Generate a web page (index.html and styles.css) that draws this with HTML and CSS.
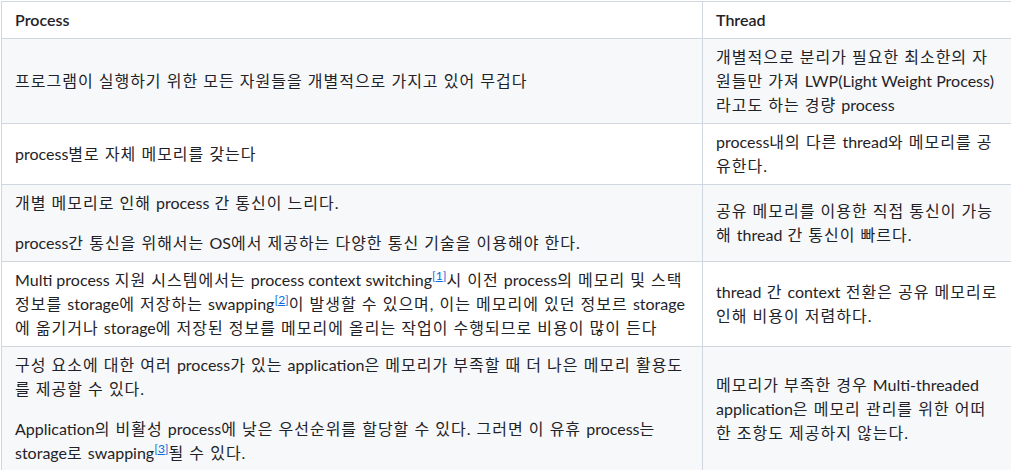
FILE: index.html
```html
<!DOCTYPE html>
<html lang="ko">
<head>
<meta charset="utf-8">
<link rel="stylesheet" href="styles.css">
</head>
<body>
<div class="wrap">
<table class="md-table">
  <colgroup><col class="c1"><col class="c2"></colgroup>
  <thead>
    <tr><th><span class="en">Process</span></th><th><span class="en">Thread</span></th></tr>
  </thead>
  <tbody>
    <tr>
      <td>프로그램이 실행하기 위한 모든 자원들을 개별적으로 가지고 있어 무겁다</td>
      <td>개별적으로 분리가 필요한 최소한의 자원들만 가져 <span class="en">LWP(Light Weight Process)</span> 라고도 하는 경량 <span class="en">process</span></td>
    </tr>
    <tr>
      <td><span class="en">process</span>별로 자체 메모리를 갖는다</td>
      <td><span class="en">process</span>내의 다른 <span class="en">thread</span>와 메모리를 공유한다.</td>
    </tr>
    <tr>
      <td><p>개별 메모리로 인해 <span class="en">process</span> 간 통신이 느리다.</p><p><span class="en">process</span>간 통신을 위해서는 <span class="en">OS</span>에서 제공하는 다양한 통신 기술을 이용해야 한다.</p></td>
      <td>공유 메모리를 이용한 직접 통신이 가능해 <span class="en">thread</span> 간 통신이 빠르다.</td>
    </tr>
    <tr>
      <td><span class="en">Multi process</span> 지원 시스템에서는 <span class="en">process context switching</span><sup class="fn">[<a href="#fn1">1</a>]</sup>시 이전 <span class="en">process</span>의 메모리 및 스택 정보를 <span class="en">storage</span>에 저장하는 <span class="en">swapping</span><sup class="fn">[<a href="#fn2">2</a>]</sup>이 발생할 수 있으며, 이는 메모리에 있던 정보르 <span class="en">storage</span>에 옮기거나 <span class="en">storage</span>에 저장된 정보를 메모리에 올리는 작업이 수행되므로 비용이 많이 든다</td>
      <td><span class="en">thread</span> 간 <span class="en">context</span> 전환은 공유 메모리로 인해 비용이 저렴하다.</td>
    </tr>
    <tr>
      <td><p>구성 요소에 대한 여러 <span class="en">process</span>가 있는 <span class="en">application</span>은 메모리가 부족할 때 더 나은 메모리 활용도를 제공할 수 있다.</p><p><span class="en">Application</span>의 비활성 <span class="en">process</span>에 낮은 우선순위를 할당할 수 있다. 그러면 이 유휴 <span class="en">process</span>는 <span class="en">storage</span>로 <span class="en">swapping</span><sup class="fn">[<a href="#fn3">3</a>]</sup>될 수 있다.</p></td>
      <td>메모리가 부족한 경우 <span class="en">Multi-threaded application</span>은 메모리 관리를 위한 어떠한 조항도 제공하지 않는다.</td>
    </tr>
  </tbody>
</table>
</div>
</body>
</html>
```
FILE: styles.css
```css
html, body {
  margin: 0;
  padding: 0;
  background: #ffffff;
  overflow: hidden;
}
body {
  font-family: "Lato", "Noto Sans CJK KR", sans-serif;
  font-size: 16px;
  line-height: 24px;
  color: #1f2328;
}
.wrap {
  padding: 1px 0 0 1px;
}
.md-table {
  border-collapse: collapse;
  table-layout: fixed;
  width: 1016px;
}
.md-table .c1 { width: 701px; }
.md-table .c2 { width: 315px; }
.md-table th,
.md-table td {
  border: 1px solid #d0d7de;
  padding: 6px 13px;
  text-align: left;
  vertical-align: middle;
  letter-spacing: 1px;
}
.md-table td:last-child {
  padding-right: 19px;
}
.md-table th {
  font-weight: 600;
}
.md-table tbody tr:nth-child(odd) {
  background: #f6f8fa;
}
.md-table p {
  margin: 0;
}
.md-table p + p {
  margin-top: 16px;
}
.en {
  letter-spacing: 0;
}
.fn {
  font-size: 12px;
  line-height: 0;
  letter-spacing: 0;
  color: #0969da;
  vertical-align: 6px;
}
.fn a {
  color: #0969da;
  text-decoration: underline;
}
```
